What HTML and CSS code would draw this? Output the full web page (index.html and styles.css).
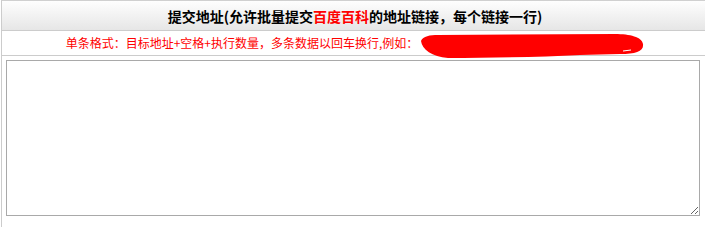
FILE: index.html
```html
<!DOCTYPE html>
<html lang="zh-CN">

<head>
    <meta charset="UTF-8">
    <title>提交地址</title>
    <link rel="stylesheet" href="styles.css">
</head>

<body>
    <div class="submit-box">
        <div class="submit-head">
            提交地址(允许批量提交<span class="red">百度百科</span>的地址链接，每个链接一行)
        </div>
        <div class="submit-tip">
            单条格式：目标地址+空格+执行数量，多条数据以回车换行,例如：<svg class="mask" width="224" height="25" viewBox="0 0 224 25">
                <!-- 打码 -->
                <path d="M1,8 C3,3 10,2 18,2 L195,1 C210,1 222,4 223,11 C224,18 216,21 200,21 L160,22 C120,24 70,25 28,25 C12,24 2,16 1,8 Z" fill="#f00"/>
                <path d="M203,18 L211,17" stroke="#fff" stroke-width="1"/>
            </svg>
        </div>
        <div class="submit-body">
            <textarea class="urls"></textarea>
        </div>
    </div>
</body>

</html>
```
FILE: styles.css
```css
body {
    margin: 0;
    font-family: "Noto Sans CJK SC", "Liberation Sans", sans-serif;
    background-color: #fff;
    overflow: hidden;
}

.submit-box {
    width: 706px;
    margin-left: 1px;
    border-left: 1px solid #ccc;
    border-top: 1px solid #d0d0d0;
}

.submit-head {
    height: 29px;
    line-height: 31px;
    text-align: center;
    font-size: 14px;
    font-weight: bold;
    color: #000;
    background: linear-gradient(#fefefe, #e6e6e6);
    border-bottom: 1px solid #ccc;
}

.red {
    color: #f00;
}

.submit-tip {
    height: 24px;
    line-height: 24px;
    text-align: center;
    font-size: 12px;
    color: #f00;
    border-bottom: 1px solid #ccc;
    white-space: nowrap;
}

.submit-tip .mask {
    margin-left: 2px;
    vertical-align: -10px;
}

.submit-body {
    padding: 4px 4px 12px;
}

.urls {
    display: block;
    box-sizing: border-box;
    width: 694px;
    height: 156px;
    margin: 0;
    border: 1px solid #a9a9a9;
    resize: both;
}
```
